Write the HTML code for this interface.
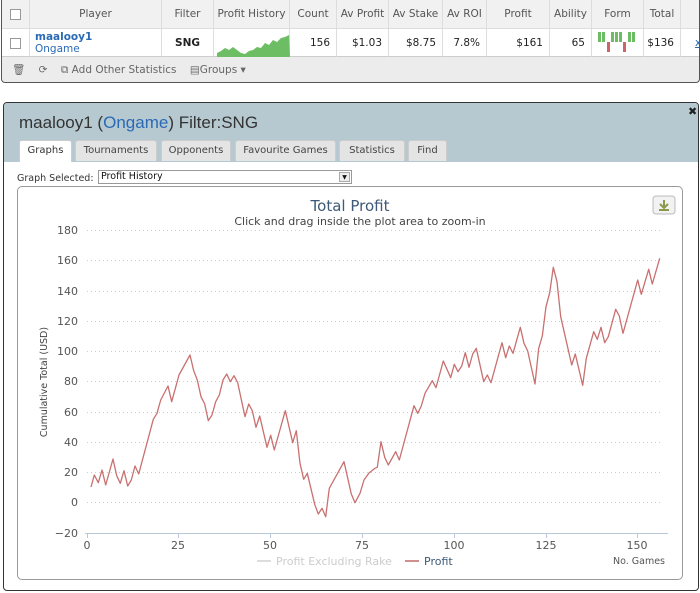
<!DOCTYPE html>
<html><head><meta charset="utf-8"><style>
*{box-sizing:border-box;margin:0;padding:0}
body{width:700px;height:593px;background:#fff;font-family:"DejaVu Sans","Liberation Sans",sans-serif;position:relative;overflow:hidden;color:#333}
.a{position:absolute}
.top{left:1px;top:0;width:699px;height:83px;border:1px solid #555;border-top:none;border-radius:0 0 4px 4px;overflow:hidden;background:#ececec}
.hdr{position:absolute;top:0;height:28px;font-size:10.5px;color:#555;line-height:28px;text-align:center;border-right:1px solid #ddd;background:#f1f1f1}
.cel{position:absolute;top:28px;height:29px;font-size:10.5px;line-height:29px;background:#fff;border-right:1px solid #ddd;border-top:1px solid #ddd;border-bottom:1px solid #ccc;text-align:right;padding-right:6px;color:#222}
.cb{width:11px;height:11px;border:1px solid #999;background:#fff}
.tab{position:absolute;top:140px;height:21px;background:#e4e4e4;border:1px solid #ccc;border-bottom:none;border-radius:3px 3px 0 0;font-size:10px;color:#444;text-align:center;line-height:20px}
</style></head><body>
<div class="a top">
 <div class="hdr" style="left:0;width:28px"><div class="cb a" style="left:8px;top:9px"></div></div>
 <div class="hdr" style="left:28px;width:132px">Player</div>
 <div class="hdr" style="left:160px;width:52px">Filter</div>
 <div class="hdr" style="left:212px;width:76px">Profit History</div>
 <div class="hdr" style="left:288px;width:47px">Count</div>
 <div class="hdr" style="left:335px;width:52px">Av Profit</div>
 <div class="hdr" style="left:387px;width:54px">Av Stake</div>
 <div class="hdr" style="left:441px;width:44px">Av ROI</div>
 <div class="hdr" style="left:485px;width:63px">Profit</div>
 <div class="hdr" style="left:548px;width:42px">Ability</div>
 <div class="hdr" style="left:590px;width:52px">Form</div>
 <div class="hdr" style="left:642px;width:37px">Total</div>
 <div class="hdr" style="left:679px;width:20px"></div>
 <div class="cel" style="left:0;width:28px"><div class="cb a" style="left:8px;top:9px"></div></div>
 <div class="cel" style="left:28px;width:132px;text-align:left;padding-left:5px;line-height:12px;padding-top:2px;color:#2a6ab5"><b>maalooy1</b><br>Ongame</div>
 <div class="cel" style="left:160px;width:52px;text-align:center;padding:0;font-weight:bold">SNG</div>
 <div class="cel" style="left:212px;width:76px;padding:0"><svg width="76" height="28" style="position:absolute;left:3px;top:0"><polygon fill="#6cbd63" points="0,24 4,22 8,19 12,21 16,18 20,21 24,24 28,25 32,22 36,21 40,18 44,19 48,14 52,16 56,11 60,13 64,9 68,8 72,6 73,28 0,28"/></svg></div>
 <div class="cel" style="left:288px;width:47px">156</div>
 <div class="cel" style="left:335px;width:52px">$1.03</div>
 <div class="cel" style="left:387px;width:54px">$8.75</div>
 <div class="cel" style="left:441px;width:44px">7.8%</div>
 <div class="cel" style="left:485px;width:63px">$161</div>
 <div class="cel" style="left:548px;width:42px">65</div>
 <div class="cel" style="left:590px;width:52px;padding:0"><svg width="52" height="28" style="position:absolute;left:0;top:0"><g fill="#6cbd63"><rect x="6" y="3" width="3" height="10"/><rect x="10" y="3" width="3" height="10"/><rect x="19" y="3" width="3" height="10"/><rect x="23" y="3" width="3" height="10"/><rect x="27" y="3" width="3" height="10"/><rect x="36" y="3" width="3" height="10"/><rect x="40" y="3" width="3" height="10"/></g><g fill="#cc6666"><rect x="15" y="13" width="3" height="10"/><rect x="31" y="13" width="3" height="10"/></g></svg></div>
 <div class="cel" style="left:642px;width:37px">$136</div>
 <div class="cel" style="left:679px;width:20px;text-align:left;padding-left:14px;color:#2a6ab5;text-decoration:underline">x</div>
 <div class="a" style="left:10px;top:63px;font-size:10.5px;color:#666;white-space:nowrap">🗑&nbsp;&nbsp;&nbsp;&nbsp;⟳&nbsp;&nbsp;&nbsp;&nbsp;⧉ Add Other Statistics&nbsp;&nbsp;&nbsp;&nbsp;▤Groups ▾</div>
</div>

<div class="a" style="left:3px;top:102px;width:696px;height:489px;border:1px solid #333;border-radius:4px;overflow:hidden;background:#fff">
 <div class="a" style="left:0;top:0;width:696px;height:59px;background:#b6c9d1"></div>
 <div class="a" style="left:15px;top:10px;font-family:'Liberation Sans',sans-serif;font-size:17px;color:#333">maalooy1 (<span style="color:#2a6ab5">Ongame</span>) Filter:SNG</div>
 <div class="a" style="left:684px;top:2px;font-size:11px;font-weight:bold;color:#222">✖</div>
</div>
<div class="tab" style="left:19px;width:53px;background:#fff;color:#333;height:22px">Graphs</div>
<div class="tab" style="left:75px;width:82px">Tournaments</div>
<div class="tab" style="left:161px;width:70px">Opponents</div>
<div class="tab" style="left:235px;width:101px">Favourite Games</div>
<div class="tab" style="left:339px;width:66px">Statistics</div>
<div class="tab" style="left:408px;width:39px">Find</div>

<div class="a" style="left:17px;top:173px;font-size:9.5px;color:#333">Graph Selected:</div>
<div class="a" style="left:98px;top:170px;width:254px;height:14px;border:1px solid #999;background:#fff;font-size:9.5px;line-height:12px;padding-left:2px;color:#111">Profit History<div class="a" style="right:1px;top:1px;width:11px;height:10px;border:1px solid #aaa;background:#eee;font-size:6px;line-height:9px;text-align:center">▼</div></div>

<div class="a" style="left:17px;top:186px;width:666px;height:394px;border:1px solid #999;border-radius:5px"></div>
<svg class="a" style="left:0;top:0" width="700" height="593">
 <text x="350" y="211" font-family="DejaVu Sans,sans-serif" font-size="15" fill="#3d5a78" text-anchor="middle">Total Profit</text>
 <text x="360" y="225" font-family="DejaVu Sans,sans-serif" font-size="11" fill="#444" text-anchor="middle">Click and drag inside the plot area to zoom-in</text>
 <rect x="653" y="196" width="22" height="18" rx="3" fill="#f2f2f2" stroke="#bbb"/>
 <path d="M664 200v7M660 204l4 4 4-4M659 210h10" stroke="#8a9a4a" stroke-width="2" fill="none"/>
 <g stroke="#ccc" stroke-dasharray="1,3" stroke-width="1">
  <line x1="87" x2="660" y1="230.5" y2="230.5"/><line x1="87" x2="660" y1="260.5" y2="260.5"/><line x1="87" x2="660" y1="291.5" y2="291.5"/><line x1="87" x2="660" y1="321.5" y2="321.5"/><line x1="87" x2="660" y1="351.5" y2="351.5"/><line x1="87" x2="660" y1="381.5" y2="381.5"/><line x1="87" x2="660" y1="412.5" y2="412.5"/><line x1="87" x2="660" y1="442.5" y2="442.5"/><line x1="87" x2="660" y1="472.5" y2="472.5"/><line x1="87" x2="660" y1="502.5" y2="502.5"/>
 </g>
 <line x1="85" x2="668" y1="533.5" y2="533.5" stroke="#b8c8d8"/>
 <g stroke="#b8c8d8"><line x1="87.5" x2="87.5" y1="533" y2="538"/><line x1="178.5" x2="178.5" y1="533" y2="538"/><line x1="270.5" x2="270.5" y1="533" y2="538"/><line x1="362.5" x2="362.5" y1="533" y2="538"/><line x1="454.5" x2="454.5" y1="533" y2="538"/><line x1="546.5" x2="546.5" y1="533" y2="538"/><line x1="637.5" x2="637.5" y1="533" y2="538"/></g>
 <g font-family="DejaVu Sans,sans-serif" font-size="11" fill="#555" text-anchor="end">
  <text x="78" y="234">180</text><text x="78" y="264">160</text><text x="78" y="295">140</text><text x="78" y="325">120</text><text x="78" y="355">100</text><text x="78" y="385">80</text><text x="78" y="416">60</text><text x="78" y="446">40</text><text x="78" y="476">20</text><text x="78" y="506">0</text><text x="78" y="537">−20</text>
 </g>
 <g font-family="DejaVu Sans,sans-serif" font-size="11" fill="#555" text-anchor="middle">
  <text x="87" y="549">0</text><text x="178" y="549">25</text><text x="270" y="549">50</text><text x="362" y="549">75</text><text x="454" y="549">100</text><text x="546" y="549">125</text><text x="637" y="549">150</text>
 </g>
 <text transform="translate(47,382) rotate(-90)" font-family="DejaVu Sans,sans-serif" font-size="9.5" fill="#444" text-anchor="middle">Cumulative Total (USD)</text>
 <text x="665" y="564" font-family="DejaVu Sans,sans-serif" font-size="9.5" fill="#555" text-anchor="end">No. Games</text>
 <line x1="257" x2="271" y1="561" y2="561" stroke="#ddd" stroke-width="2"/>
 <text x="276" y="565" font-family="DejaVu Sans,sans-serif" font-size="11" fill="#ccc">Profit Excluding Rake</text>
 <line x1="405" x2="419" y1="561" y2="561" stroke="#d09090" stroke-width="2"/>
 <text x="424" y="565" font-family="DejaVu Sans,sans-serif" font-size="11" fill="#3d5a78">Profit</text>
 <polyline fill="none" stroke="#c97070" stroke-width="1.3" stroke-linejoin="round" points="91,487 94.3,475 98.3,482.7 102,470 105.7,485 113,459 116.7,475.7 120.3,483.3 124,470.7 127.7,486 131.3,480 135,466 138.7,474 153.3,419.3 157,413.3 160.7,400 168,386 171.7,401.7 179,375 190,355 193.7,370.7 197.3,380 201,396.7 204.7,404 208.3,420.7 212,415 215.7,401.7 219.3,395 223,380 226.7,374 230.3,381.7 234,375.7 237.7,382.7 245,416.7 248.7,404 252.3,410.7 256,427.3 259.7,416 267,447.3 270.7,435.3 274.3,450 285.3,410.7 292.7,442.7 296.3,430.7 300,463.3 303.7,479.3 307.3,473.3 314.7,504.3 318.3,514 322,508.3 325.7,516.7 329.3,488.3 344,461.7 351.3,494 355,502.7 360,493.3 364,480 369,473 375,468.3 377.3,467.3 381,441.7 384.7,457.3 388.3,465 395.7,451.7 399.3,460 414,405.7 417.7,413.3 421.3,406 425,393.3 432.3,380.7 436,387.7 443.3,361 450.7,377.7 454.3,364.3 458,371.7 461.7,366 465.3,352.7 469,367.3 472.7,354 476.3,348.3 483.7,381.7 487.3,375 491,382.7 502,342.7 505.7,357.7 509.3,346 513,353.3 520.3,327.3 524,343.3 527.7,351 535,384 538.7,348.3 542.3,336 546,306.7 549.7,292.7 553.3,267.3 557,281.7 560.7,316.7 571.7,365 575.3,354 582.7,385.3 586.3,358.3 593.7,331.7 597.3,339.3 601,327.3 604.7,342.7 608.3,336.7 615.7,309.3 619.3,316 623,333.3 637.7,280 641.3,294.3 648.7,269.3 652.3,284 659.7,258.3"/>
</svg>
</body></html>
